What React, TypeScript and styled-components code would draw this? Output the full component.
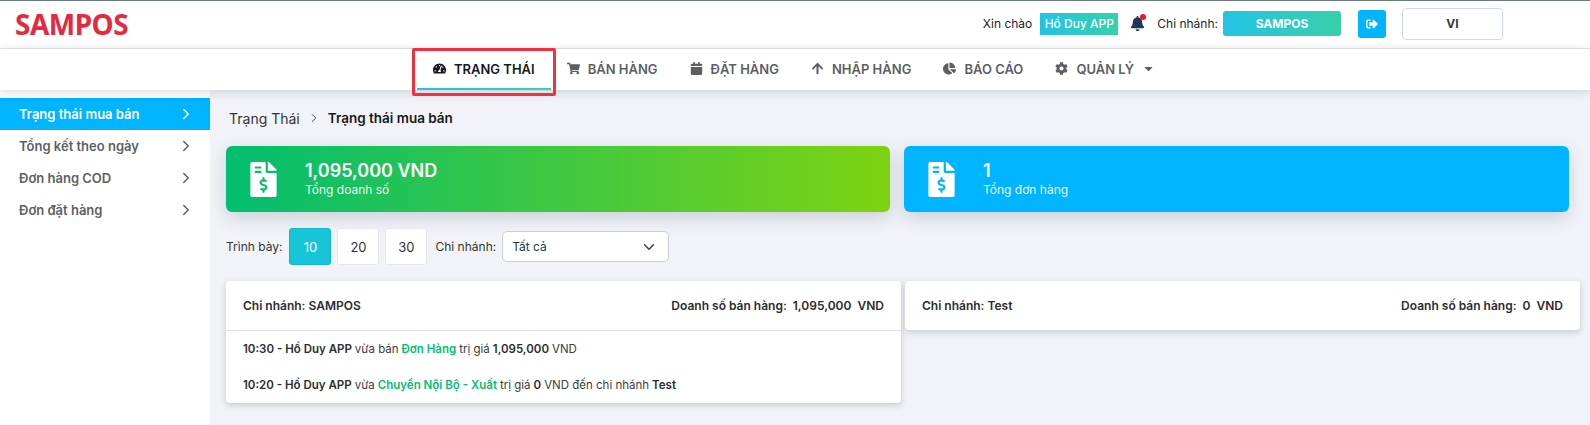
import React from "react";
import styled, { createGlobalStyle } from "styled-components";
import {
  FaArrowUp,
  FaBell,
  FaCalendar,
  FaCaretDown,
  FaChartPie,
  FaCog,
  FaFileInvoiceDollar,
  FaShoppingCart,
  FaSignOutAlt,
  FaTachometerAlt,
} from "react-icons/fa";
import { ChevronDown, ChevronRight } from "lucide-react";

const sideItems = ["Trạng thái mua bán", "Tổng kết theo ngày", "Đơn hàng COD", "Đơn đặt hàng"];

const navItems = [
  { label: "TRẠNG THÁI", icon: <FaTachometerAlt />, active: true },
  { label: "BÁN HÀNG", icon: <FaShoppingCart /> },
  { label: "ĐẶT HÀNG", icon: <FaCalendar /> },
  { label: "NHẬP HÀNG", icon: <FaArrowUp /> },
  { label: "BÁO CÁO", icon: <FaChartPie /> },
  { label: "QUẢN LÝ", icon: <FaCog />, caret: true },
];

const App = () => {
  return (
    <Page>
      <GlobalStyle />
      <Header>
        <Logo>SAMPOS</Logo>
        <UserArea>
          <HeaderText>Xin chào</HeaderText>
          <UserBadge>Hồ Duy APP</UserBadge>
          <BellWrapper>
            <FaBell />
            <BellDot />
          </BellWrapper>
          <HeaderText>Chi nhánh:</HeaderText>
          <BranchButton>SAMPOS</BranchButton>
          <LogoutButton>
            <FaSignOutAlt />
          </LogoutButton>
          <LangButton>VI</LangButton>
        </UserArea>
      </Header>
      <Nav>
        {navItems.map((item) => (
          <NavItem key={item.label} $active={!!item.active}>
            {item.icon}
            <span>{item.label}</span>
            {item.caret && <FaCaretDown />}
          </NavItem>
        ))}
      </Nav>
      <Body>
        <Sidebar>
          {sideItems.map((item, i) => (
            <SideItem key={item} $active={i === 0}>
              {item}
              <ChevronRight size={18} strokeWidth={2} />
            </SideItem>
          ))}
        </Sidebar>
        <Main>
          <Breadcrumb>
            <span>Trạng Thái</span>
            <ChevronRight size={14} strokeWidth={1.5} />
            <strong>Trạng thái mua bán</strong>
          </Breadcrumb>
          <Stats>
            <StatCard $bg="linear-gradient(90deg, #02bd70, #7ed312)">
              <StatIcon $size={35}>
                <FaFileInvoiceDollar />
              </StatIcon>
              <div>
                <StatValue>1,095,000 VND</StatValue>
                <StatLabel>Tổng doanh số</StatLabel>
              </div>
            </StatCard>
            <StatCard $bg="#00b4ff">
              <StatIcon $size={35}>
                <FaFileInvoiceDollar />
              </StatIcon>
              <div>
                <StatValue>1</StatValue>
                <StatLabel>Tổng đơn hàng</StatLabel>
              </div>
            </StatCard>
          </Stats>
          <Filters>
            <FilterLabel>Trình bày:</FilterLabel>
            <PageSizes>
              <SizeButton $active>10</SizeButton>
              <SizeButton>20</SizeButton>
              <SizeButton>30</SizeButton>
            </PageSizes>
            <FilterLabel>Chi nhánh:</FilterLabel>
            <SelectBox>
              Tất cả
              <ChevronDown size={18} color="#3a4252" />
            </SelectBox>
          </Filters>
          <Panels>
            <Panel>
              <PanelHead>
                <span>Chi nhánh: SAMPOS</span>
                <span>Doanh số bán hàng:&nbsp; 1,095,000&nbsp; VND</span>
              </PanelHead>
              <PanelBody>
                <LogRow>
                  <b>10:30 - Hồ Duy APP</b> vừa bán <Accent>Đơn Hàng</Accent> trị giá <b>1,095,000</b> VND
                </LogRow>
                <LogRow>
                  <b>10:20 - Hồ Duy APP</b> vừa <Accent>Chuyển Nội Bộ - Xuất</Accent> trị giá <b>0</b> VND đến chi nhánh{" "}
                  <b>Test</b>
                </LogRow>
              </PanelBody>
            </Panel>
            <Panel>
              <PanelHead>
                <span>Chi nhánh: Test</span>
                <span>Doanh số bán hàng:&nbsp; 0&nbsp; VND</span>
              </PanelHead>
            </Panel>
          </Panels>
        </Main>
      </Body>
    </Page>
  );
};

const GlobalStyle = createGlobalStyle`
  html, body {
    margin: 0;
    padding: 0;
    height: 100%;
    overflow: hidden;
  }
  body {
    font-family: "Inter", "Liberation Sans", sans-serif;
    background: #f1f3f8;
    color: #212529;
  }
  * {
    box-sizing: border-box;
  }
`;

const Page = styled.div`
  display: flex;
  flex-direction: column;
  height: 425px;
  overflow: hidden;
`;

const Header = styled.header`
  height: 49px;
  flex-shrink: 0;
  display: flex;
  align-items: center;
  justify-content: space-between;
  padding: 0 87px 2px 15px;
  background: #fff;
  border-top: 1px solid #6a7a84;
  border-bottom: 1px solid #e3e5e8;
`;

const Logo = styled.div`
  font-family: "Noto Sans", sans-serif;
  font-weight: 700;
  font-size: 28px;
  line-height: 1;
  letter-spacing: -0.5px;
  color: #e5293f;
`;

const UserArea = styled.div`
  display: flex;
  align-items: center;
`;

const HeaderText = styled.span`
  font-size: 12px;
  color: #212529;
  white-space: nowrap;
`;

const UserBadge = styled.span`
  margin-left: 8px;
  height: 22px;
  width: 78px;
  display: flex;
  align-items: center;
  justify-content: center;
  font-size: 12px;
  font-weight: 500;
  color: #fff;
  background: linear-gradient(90deg, #22c4e4, #38cfaa);
`;

const BellWrapper = styled.span`
  position: relative;
  display: flex;
  margin: 0 12px;
  font-size: 15px;
  color: #1d3557;
`;

const BellDot = styled.i`
  position: absolute;
  top: -2px;
  right: -1px;
  width: 6px;
  height: 6px;
  border-radius: 50%;
  background: #f01523;
`;

const BranchButton = styled.div`
  margin-left: 5px;
  width: 118px;
  height: 25px;
  display: flex;
  align-items: center;
  justify-content: center;
  font-size: 12px;
  font-weight: 700;
  color: #fff;
  border-radius: 3px;
  background: linear-gradient(90deg, #22c4e4, #38cfaa);
`;

const LogoutButton = styled.div`
  margin-left: 17px;
  width: 28px;
  height: 28px;
  display: flex;
  align-items: center;
  justify-content: center;
  font-size: 12px;
  color: #fff;
  border-radius: 3px;
  background: #00b4ff;
`;

const LangButton = styled.div`
  margin-left: 16px;
  width: 101px;
  height: 32px;
  display: flex;
  align-items: center;
  justify-content: center;
  font-size: 12px;
  font-weight: 700;
  color: #2f3a40;
  border: 1px solid #c9dcf5;
  border-radius: 4px;
  background: #fff;
`;

const Nav = styled.nav`
  position: relative;
  z-index: 1;
  height: 41px;
  flex-shrink: 0;
  display: flex;
  justify-content: center;
  padding-right: 2px;
  background: #fff;
  box-shadow: 0 2px 10px rgba(60, 70, 90, 0.2);
`;

const NavItem = styled.div<{ $active: boolean }>`
  position: relative;
  display: flex;
  align-items: center;
  column-gap: 8px;
  padding: 0 16px;
  font-size: 13px;
  font-weight: 600;
  color: ${({ $active }) => ($active ? "#16181d" : "#5d5f65")};
  border-bottom: 2px solid transparent;
  border-image: ${({ $active }) => ($active ? "linear-gradient(90deg, #22c4e4, #38cfaa) 1" : "none")};
  white-space: nowrap;

  svg {
    font-size: 13px;
  }

  ${({ $active }) =>
    $active &&
    `
      &::after {
        content: "";
        position: absolute;
        left: -5px;
        right: -5px;
        top: -1px;
        bottom: -8px;
        border: 3px solid #f4303f;
        border-radius: 2px;
      }
    `}
`;

const Body = styled.div`
  flex: 1;
  display: flex;
  min-height: 0;
`;

const Sidebar = styled.aside`
  width: 210px;
  flex-shrink: 0;
  padding-top: 8px;
  background: #fff;
`;

const SideItem = styled.div<{ $active: boolean }>`
  height: 32px;
  display: flex;
  align-items: center;
  justify-content: space-between;
  padding: 0 15px 0 19px;
  font-size: 13px;
  font-weight: 600;
  color: ${({ $active }) => ($active ? "#fff" : "#5d5f65")};
  background: ${({ $active }) => ($active ? "#00b4ff" : "transparent")};
`;

const Main = styled.main`
  flex: 1;
  min-width: 0;
  padding: 18px 20px 0 16px;
`;

const Breadcrumb = styled.div`
  display: flex;
  align-items: center;
  column-gap: 7px;
  height: 20px;
  padding-left: 3px;
  font-size: 14px;
  color: #333;

  strong {
    font-weight: 600;
    font-size: 13.5px;
    color: #16181d;
  }
`;

const Stats = styled.div`
  display: grid;
  grid-template-columns: 664px 665px;
  column-gap: 14px;
  margin-top: 18px;
`;

const StatCard = styled.div<{ $bg: string }>`
  height: 66px;
  display: flex;
  align-items: center;
  column-gap: 24px;
  padding: 0 20px;
  color: #fff;
  border-radius: 6px;
  background: ${({ $bg }) => $bg};
  box-shadow: 0 6px 18px rgba(60, 70, 90, 0.2);
`;

const StatIcon = styled.div<{ $size: number }>`
  display: flex;
  font-size: ${({ $size }) => $size}px;
`;

const StatValue = styled.div`
  font-size: 18px;
  font-weight: 600;
  line-height: 22px;
`;

const StatLabel = styled.div`
  font-size: 12px;
  line-height: 16px;
  opacity: 0.9;
`;

const Filters = styled.div`
  display: flex;
  align-items: center;
  margin-top: 16px;
  height: 37px;
`;

const FilterLabel = styled.span`
  font-size: 12px;
  color: #333;
  white-space: nowrap;
`;

const PageSizes = styled.div`
  display: flex;
  column-gap: 6px;
  margin: 0 8px 0 7px;
`;

const SizeButton = styled.div<{ $active?: boolean }>`
  width: 42px;
  height: 37px;
  display: flex;
  align-items: center;
  justify-content: center;
  font-size: 13px;
  color: ${({ $active }) => ($active ? "#fff" : "#333")};
  background: ${({ $active }) => ($active ? "#16c5d8" : "#fff")};
  border: 1px solid ${({ $active }) => ($active ? "#16b5c8" : "#e4e7ee")};
  border-radius: 3px;
`;

const SelectBox = styled.div`
  margin-left: 6px;
  width: 167px;
  height: 31px;
  display: flex;
  align-items: center;
  justify-content: space-between;
  padding: 0 10px 0 9px;
  font-size: 12px;
  color: #24385b;
  background: #fff;
  border: 1px solid #c8ced9;
  border-radius: 5px;
`;

const Panels = styled.div`
  display: grid;
  grid-template-columns: 675px 675px;
  column-gap: 4px;
  align-items: start;
  margin-top: 16px;
`;

const Panel = styled.section`
  background: #fff;
  border-radius: 4px;
  box-shadow: 0 2px 6px rgba(60, 70, 90, 0.25);
`;

const PanelHead = styled.div`
  height: 49px;
  display: flex;
  align-items: center;
  justify-content: space-between;
  padding: 0 17px;
  font-size: 12px;
  font-weight: 600;
  color: #2b2d31;
`;

const PanelBody = styled.div`
  height: 73px;
  padding: 0 17px;
  border-top: 1px solid #dfe2e8;
`;

const LogRow = styled.div`
  height: 36px;
  display: flex;
  align-items: center;
  column-gap: 3px;
  font-size: 11.5px;
  color: #3a3c40;

  b {
    font-weight: 600;
    color: #2b2d31;
  }
`;

const Accent = styled.span`
  font-weight: 600;
  color: #02bd70;
`;

export default App;
